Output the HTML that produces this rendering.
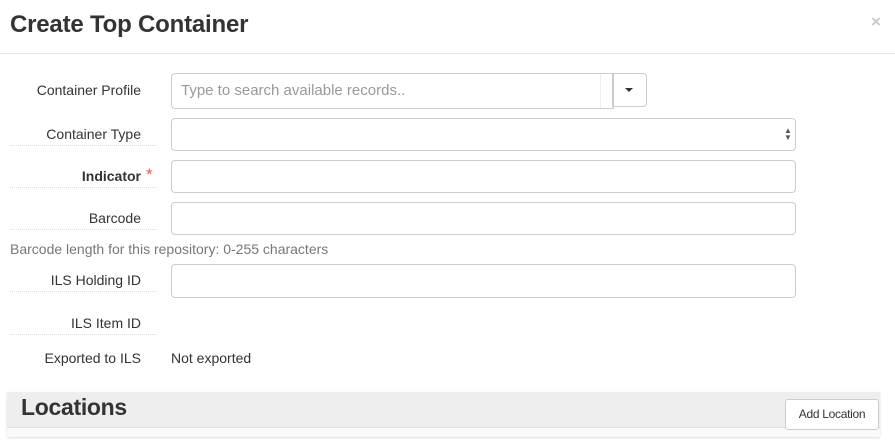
<!DOCTYPE html>
<html><head><meta charset="utf-8"><style>
body{margin:0;width:895px;height:447px;background:#fff;font-family:"Liberation Sans",sans-serif;color:#333;position:relative;overflow:hidden}
.a{position:absolute}
.lbl{position:absolute;right:754px;font-size:14px;color:#333;white-space:nowrap}
.dot{position:absolute;left:10px;width:147px;border-top:1px dotted #ddd}
.in{position:absolute;left:171px;width:623px;height:31px;border:1px solid #ccc;border-radius:4px;background:#fff}
</style></head><body>
<div class="a" style="left:10px;top:11px;font-size:24px;color:#333;font-weight:bold;letter-spacing:-0.2px">Create Top Container</div>
<div class="a" style="left:871px;top:12px;font-size:17px;color:#c8c8c8;font-weight:bold">×</div>
<div class="a" style="left:0;top:53px;width:895px;border-top:1px solid #e5e5e5"></div>

<div class="lbl" style="top:82px">Container Profile</div>
<div class="a" style="left:171px;top:73px;width:441px;height:34px;border:1px solid #ccc;border-radius:4px 0 0 4px"></div>
<div class="a" style="left:600px;top:74px;height:34px;border-left:1px solid #eee"></div>
<div class="a" style="left:181px;top:82px;font-size:15px;color:#999">Type to search available records..</div>
<div class="a" style="left:612px;top:73px;width:33px;height:32px;border:1px solid #ccc;border-radius:0 4px 4px 0"></div>
<div class="a" style="left:625px;top:88px;width:0;height:0;border-left:4px solid transparent;border-right:4px solid transparent;border-top:4px solid #333"></div>

<div class="lbl" style="top:126px">Container Type</div>
<div class="dot" style="top:145px"></div>
<div class="in" style="top:118px"></div>
<div class="a" style="left:784px;top:127px;font-size:8px;line-height:7px;color:#555">▲<br>▼</div>

<div class="lbl" style="top:168px;font-weight:bold">Indicator</div>
<div class="a" style="left:146px;top:165px;font-size:17px;color:#e55">*</div>
<div class="dot" style="top:187px"></div>
<div class="in" style="top:160px"></div>

<div class="lbl" style="top:210px">Barcode</div>
<div class="dot" style="top:229px"></div>
<div class="in" style="top:202px"></div>
<div class="a" style="left:10px;top:241px;font-size:14px;color:#777">Barcode length for this repository: 0-255 characters</div>

<div class="lbl" style="top:272px">ILS Holding ID</div>
<div class="dot" style="top:291px"></div>
<div class="in" style="top:264px;height:32px"></div>

<div class="lbl" style="top:315px">ILS Item ID</div>
<div class="dot" style="top:334px"></div>

<div class="lbl" style="top:350px">Exported to ILS</div>
<div class="a" style="left:171px;top:350px;font-size:14px">Not exported</div>

<div class="a" style="left:7px;top:392px;width:873px;height:45px;background:#f9f9f9;box-shadow:0 1px 2px rgba(0,0,0,.15)"></div>
<div class="a" style="left:7px;top:392px;width:873px;height:35px;background:#eee;border-bottom:1px solid #ddd"></div>
<div class="a" style="left:21px;top:394px;font-size:23px;color:#333;font-weight:bold;letter-spacing:-0.3px">Locations</div>
<div class="a" style="left:785px;top:399px;width:92px;height:29px;background:#fff;border:1px solid #ccc;border-radius:3px;font-size:12px;line-height:29px;text-align:center;color:#333;letter-spacing:-0.3px">Add Location</div>
</body></html>
